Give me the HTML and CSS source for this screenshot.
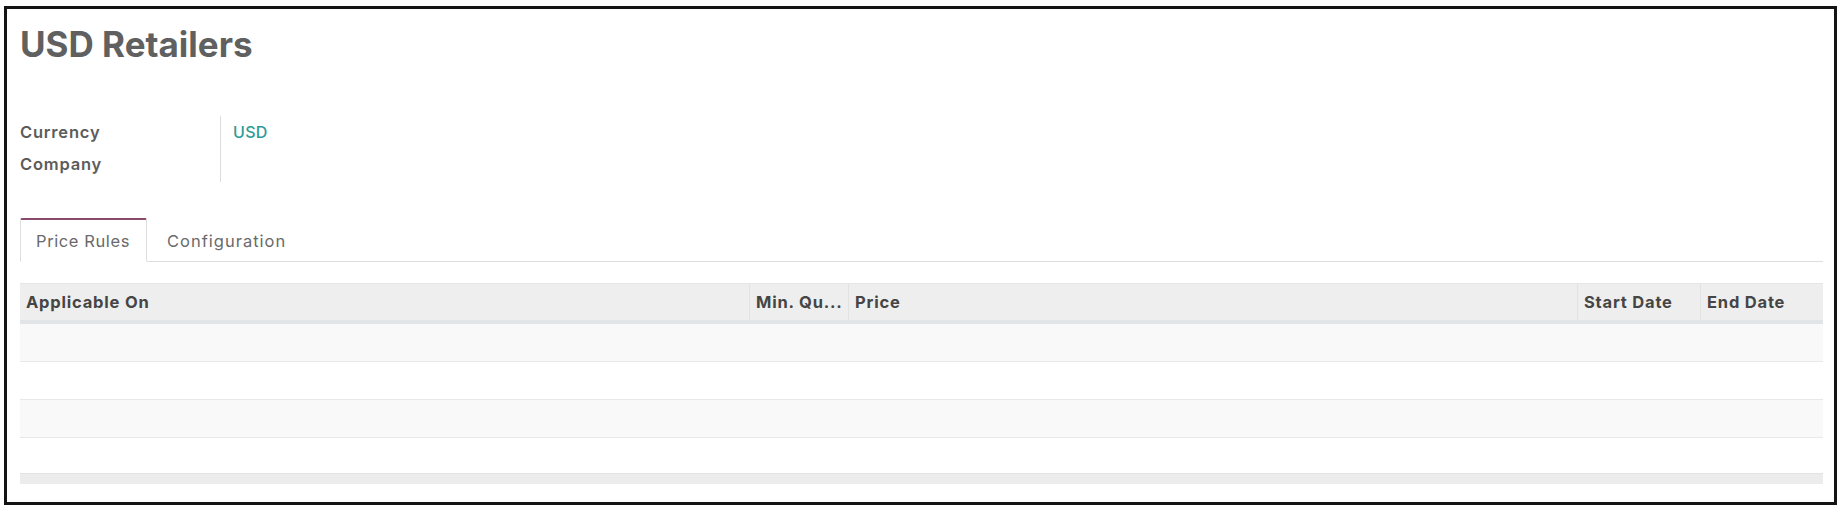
FILE: index.html
```html
<!DOCTYPE html>
<html>
<head>
<meta charset="utf-8">
<link rel="stylesheet" href="styles.css">
</head>
<body>
<div class="frame">
  <h1 class="title">USD Retailers</h1>
  <div class="fields">
    <div class="labels">
      <div class="label">Currency</div>
      <div class="label">Company</div>
    </div>
    <div class="values">
      <div class="value link">USD</div>
      <div class="value"></div>
    </div>
  </div>
  <div class="tabs">
    <div class="tab active">Price Rules</div>
    <div class="tab config">Configuration</div>
  </div>
  <div class="table">
    <div class="thead">
      <div class="th c1">Applicable On</div>
      <div class="th c2">Min. Qu...</div>
      <div class="th c3">Price</div>
      <div class="th c4">Start Date</div>
      <div class="th c5">End Date</div>
    </div>
    <div class="row stripe"></div>
    <div class="row"></div>
    <div class="row stripe"></div>
    <div class="row last"></div>
    <div class="tfoot"></div>
  </div>
</div>
</body>
</html>
```
FILE: styles.css
```css
html, body {
  margin: 0;
  padding: 0;
  background: #ffffff;
}
body {
  font-family: "Inter", "Open Sans", sans-serif;
  color: #666666;
}
.frame {
  box-sizing: border-box;
  margin: 6px 0 0 4px;
  width: 1833px;
  height: 499px;
  border: 3px solid #141414;
  padding: 15px 11px 0 13px;
}
.title {
  margin: 0;
  font-size: 35px;
  line-height: 40px;
  font-weight: 700;
  color: #606060;
}
.fields {
  display: flex;
  margin-top: 52px;
}
.labels {
  width: 200px;
  border-right: 1px solid #dcdcdc;
  padding: 0 0 2px;
}
.label {
  font-size: 16.5px;
  font-weight: 600;
  letter-spacing: 0.8px;
  line-height: 32px;
  color: #5c5c5c;
}
.values {
  padding: 0 12px;
}
.value {
  font-size: 16px;
  font-weight: 500;
  letter-spacing: 0.3px;
  line-height: 32px;
  height: 32px;
}
.link {
  color: #2a9c95;
}
.tabs {
  display: flex;
  margin-top: 36px;
  border-bottom: 1px solid #dedede;
  height: 43px;
}
.tab {
  box-sizing: border-box;
  height: 44px;
  padding: 0 17px;
  font-size: 16.5px;
  letter-spacing: 0.6px;
  line-height: 42px;
  color: #6a6a6a;
  white-space: nowrap;
  border: 1px solid transparent;
  border-top-width: 2px;
}
.tab.active {
  width: 127px;
  padding: 0 0 0 15px;
  border-color: #dedede;
  border-top-color: #8a4a6c;
  border-bottom-color: #ffffff;
  border-radius: 2px 2px 0 0;
  background: #ffffff;
}
.tab.config {
  padding-left: 19px;
  letter-spacing: 1px;
}
.table {
  margin-top: 21px;
}
.thead {
  display: flex;
  height: 36px;
  background: #eeeeee;
  border-bottom: 4px solid #e1e5e8;
  border-top: 1px solid #e6e6e6;
}
.th {
  box-sizing: border-box;
  font-size: 16.5px;
  font-weight: 700;
  letter-spacing: 0.8px;
  line-height: 36px;
  color: #454545;
  padding-left: 6px;
  border-left: 1px solid #e2e2e2;
  white-space: nowrap;
  overflow: hidden;
}
.c1 { width: 729px; border-left: none; }
.c2 { width: 99px; }
.c3 { flex: 1; }
.c4 { width: 123px; }
.c5 { width: 123px; }
.row {
  height: 37px;
  border-bottom: 1px solid #e6e9eb;
}
.row.stripe {
  background: #f9f9f9;
}
.row.last {
  height: 35px;
  border-bottom: 1px solid #e3e3e3;
}
.tfoot {
  height: 10px;
  background: #ececec;
}
```
